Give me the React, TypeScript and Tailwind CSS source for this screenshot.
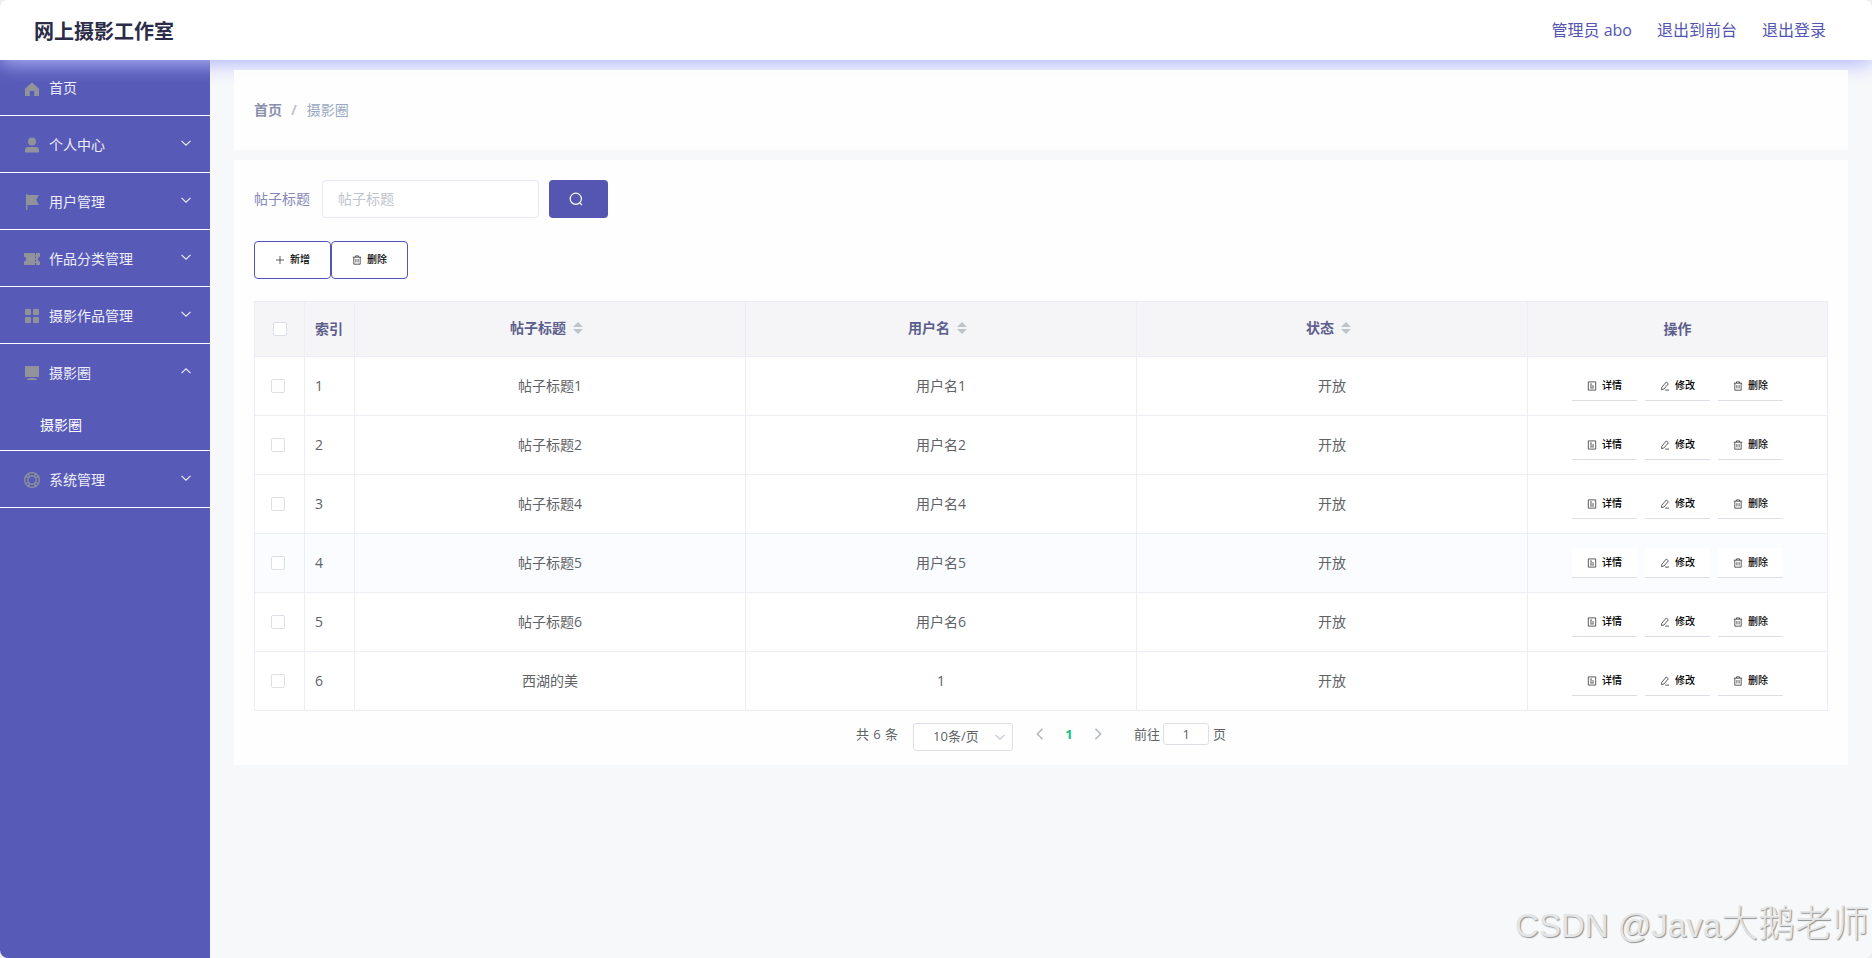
import { useState } from "react";
import { clsx } from "clsx";

interface MenuItem {
  label: string;
  icon: string;
  children?: string[];
}

const menus: MenuItem[] = [
  { label: "首页", icon: "home" },
  { label: "个人中心", icon: "user", children: [] },
  { label: "用户管理", icon: "flag", children: [] },
  { label: "作品分类管理", icon: "ticket", children: [] },
  { label: "摄影作品管理", icon: "grid", children: [] },
  { label: "摄影圈", icon: "platform", children: ["摄影圈"] },
  { label: "系统管理", icon: "help", children: [] },
];

const rows = [
  { title: "帖子标题1", user: "用户名1", status: "开放" },
  { title: "帖子标题2", user: "用户名2", status: "开放" },
  { title: "帖子标题4", user: "用户名4", status: "开放" },
  { title: "帖子标题5", user: "用户名5", status: "开放" },
  { title: "帖子标题6", user: "用户名6", status: "开放" },
  { title: "西湖的美", user: "1", status: "开放" },
];

export default function App() {
  return (
    <div className="relative h-[958px] w-[1872px] overflow-hidden bg-[#eeeeee]">
      <div className="flex h-full flex-col overflow-hidden rounded-lg bg-[#f7f8fa] font-['Open_Sans','Noto_Sans_CJK_SC',sans-serif] text-sm">
        <Header />
        <div className="flex flex-1">
          <Sidebar />
          <main className="relative z-20 flex-1 px-6 pt-2.5">
            <div className="flex h-20 items-center bg-white/90 px-5">
              <span className="font-bold text-[#8a8fae]">首页</span>
              <span className="mr-2.5 ml-[9px] font-bold text-[#c0c4cc]">/</span>
              <span className="text-[#9aa8c4]">摄影圈</span>
            </div>
            <PostPanel />
          </main>
        </div>
      </div>
      <div className="absolute right-[3px] bottom-2 z-30 flex items-baseline font-['Liberation_Sans','Noto_Sans_CJK_SC',sans-serif] text-[#e3e5e6] [text-shadow:1px_1px_1px_#8f8f8f]">
        <span className="text-[33px]">CSDN @Java</span>
        <span className="text-[37px] leading-none font-light">大鹅老师</span>
      </div>
    </div>
  );
}

function Header() {
  return (
    <header className="relative z-10 flex h-[60px] shrink-0 items-center justify-between bg-white pr-[46px] pl-[34px] shadow-[0_4px_20px_#afb4fc]">
      <h1 className="pt-[3px] text-xl font-bold text-[#2b2c48]">网上摄影工作室</h1>
      <nav className="flex gap-[25px] text-base text-[#5355b3]">
        <span>管理员 abo</span>
        <span>退出到前台</span>
        <span>退出登录</span>
      </nav>
    </header>
  );
}

function Sidebar() {
  const [opened, setOpened] = useState("摄影圈");

  return (
    <aside className="w-[210px] shrink-0 bg-[#575ab7] text-[#eeeef8]">
      {menus.map((menu) => {
        const isOpen = opened === menu.label;
        return (
          <div key={menu.label} className="border-b border-white">
            <div
              onClick={() => menu.children && setOpened(isOpen ? "" : menu.label)}
              className={clsx(
                "flex cursor-pointer items-center pr-[18px] pl-5",
                menu.children ? "h-14 pt-0.5" : "h-[55px] pt-0.5"
              )}
            >
              <MenuIcon name={menu.icon} />
              <span className={clsx("ml-[5px] flex-1", !menu.children && "pb-0.5")}>{menu.label}</span>
              {menu.children && (
                <Chevron className={clsx("mb-[5px] h-3 w-3", isOpen && "rotate-180")} />
              )}
            </div>
            {isOpen &&
              menu.children?.map((child) => (
                <div key={child} className="flex h-[50px] items-center pl-10 text-white">
                  {child}
                </div>
              ))}
          </div>
        );
      })}
    </aside>
  );
}

function PostPanel() {
  return (
    <section className="mt-2.5 h-[605px] bg-white/90 p-5">
      <div className="flex h-[38px] items-center">
        <label className="w-[68px] text-[#8588b8]">帖子标题</label>
        <input
          placeholder="帖子标题"
          className="h-[38px] w-[217px] rounded border border-[#e9e8fb] bg-white px-[15px] pb-0.5 outline-none placeholder:text-[#c0c4cc]"
        />
        <button className="ml-2.5 flex h-[38px] w-[59px] items-center justify-center rounded bg-[#5456b1] pr-[5px] text-white">
          <svg viewBox="0 0 14 14" className="h-3.5 w-3.5" fill="none" stroke="currentColor" strokeWidth={1.2}>
            <circle cx="6.8" cy="6.8" r="5.6" />
            <path d="M10.8 10.8L13 13" />
          </svg>
        </button>
      </div>

      <div className="mt-[23px] flex">
        <ToolButton icon="plus" label="新增" />
        <ToolButton icon="trash" label="删除" />
      </div>

      <table className="mt-[22px] w-[1574px] table-fixed border-separate border-spacing-0 border-t border-l border-[#ebeef5]">
        <colgroup>
          <col className="w-[50px]" />
          <col className="w-[50px]" />
          <col className="w-[391px]" />
          <col className="w-[391px]" />
          <col className="w-[391px]" />
          <col className="w-[300px]" />
        </colgroup>
        <thead>
          <tr className="h-[55px] bg-[#f5f5f8] text-[#5c5e8c]">
            <th className={cell}>
              <Checkbox className="ml-[18px]" />
            </th>
            <th className={clsx(cell, "pl-2.5 text-left")}>索引</th>
            {["帖子标题", "用户名", "状态"].map((name) => (
              <th key={name} className={cell}>
                <div className="flex items-center justify-center pb-0.5">
                  {name}
                  <SortCaret />
                </div>
              </th>
            ))}
            <th className={cell}>操作</th>
          </tr>
        </thead>
        <tbody className="text-center text-[#606266]">
          {rows.map((row, i) => (
            <tr key={row.title} className={clsx("h-[59px]", i === 3 ? "bg-[#fafcff]" : "bg-white")}>
              <td className={cell}>
                <Checkbox className="ml-4" />
              </td>
              <td className={clsx(cell, "pl-2.5 text-left")}>{i + 1}</td>
              <td className={cell}>{row.title}</td>
              <td className={cell}>{row.user}</td>
              <td className={cell}>{row.status}</td>
              <td className={cell}>
                <div className="flex justify-center gap-2">
                  <RowButton icon="doc" label="详情" />
                  <RowButton icon="edit" label="修改" />
                  <RowButton icon="trash" label="删除" />
                </div>
              </td>
            </tr>
          ))}
        </tbody>
      </table>

      <Pagination />
    </section>
  );
}

const cell = "border-r border-b border-[#ebeef5] p-0";

function Checkbox({ className }: { className?: string }) {
  return <span className={clsx("block h-3.5 w-3.5 rounded-xs border border-[#dcdfe6] bg-white", className)} />;
}

function SortCaret() {
  return (
    <svg viewBox="0 0 24 14" className="h-3.5 w-6" fill="#c0c4cc">
      <path d="M7 6L12 1L17 6Z" />
      <path d="M7 8L12 13L17 8Z" />
    </svg>
  );
}

function ToolButton({ icon, label }: { icon: string; label: string }) {
  return (
    <button className="flex h-[38px] w-[77px] items-center justify-center rounded border border-[#5355b3] bg-white pb-px text-[10px] font-medium text-black">
      <ActionIcon name={icon} />
      <span className="ml-[5px]">{label}</span>
    </button>
  );
}

function RowButton({ icon, label }: { icon: string; label: string }) {
  return (
    <button className="flex h-[30px] w-[65px] items-center justify-center border-b border-[#dcdfe6] bg-white text-[10px] font-medium text-black">
      <ActionIcon name={icon} />
      <span className="ml-[5px]">{label}</span>
    </button>
  );
}

function Pagination() {
  return (
    <div className="mt-3 flex items-start justify-center text-[13px] text-[#606266]">
      <span className="leading-[22px] [word-spacing:1px]">共 6 条</span>
      <div className="ml-[15px] flex h-7 w-[100px] items-center rounded-[3px] border border-[#dcdfe6] bg-white pr-1.5 pl-[19px]">
        <span className="flex-1 pb-0.5">10条/页</span>
        <Chevron className="h-3 w-3 text-[#c0c4cc]" />
      </div>
      <div className="ml-5 flex h-[22px] items-center">
        <Chevron className="h-3.5 w-3.5 rotate-90 text-[#b4b8c0]" bold />
        <span className="w-[44px] text-center font-bold text-[#13c07f]">1</span>
        <Chevron className="h-3.5 w-3.5 -rotate-90 text-[#b4b8c0]" bold />
      </div>
      <div className="ml-[29px] flex items-center leading-[22px]">
        <span>前往</span>
        <span className="mr-1 ml-[3px] flex h-[22px] w-[46px] items-center justify-center rounded-[3px] border border-[#dcdfe6] bg-white">
          1
        </span>
        <span>页</span>
      </div>
    </div>
  );
}

function Chevron({ className, bold }: { className?: string; bold?: boolean }) {
  return (
    <svg
      viewBox="0 0 12 12"
      className={className}
      fill="none"
      stroke="currentColor"
      strokeWidth={bold ? 1.4 : 1.1}
    >
      <path d="M1.5 3.8L6 8.2L10.5 3.8" />
    </svg>
  );
}

function ActionIcon({ name }: { name: string }) {
  return (
    <svg viewBox="0 0 10 10" className="h-2.5 w-2.5" fill="none" stroke="#333" strokeWidth={0.8}>
      {name === "plus" && <path d="M5 1V9M1 5H9" />}
      {name === "trash" && (
        <path d="M0.8 2.2H9.2M3.4 2V0.9H6.6V2M1.8 2.4V9.2H8.2V2.4M3.9 4V7.4M6.1 4V7.4" />
      )}
      {name === "doc" && <path d="M1.3 0.9H8.7V9.1H1.3ZM3 3.1H5M3 5H7M3 6.9H7" />}
      {name === "edit" && <path d="M1.8 6.2L6.3 1L8.4 2.8L3.9 8L1.5 8.6ZM5.2 9.1H9" />}
    </svg>
  );
}

function MenuIcon({ name }: { name: string }) {
  return (
    <svg viewBox="0 0 18 18" className="mx-[3px] h-[18px] w-[18px]" fill="#909399">
      {name === "home" && <path d="M9 2.6L16 8.4V16H11.2V11H6.8V16H2V8.4Z" />}
      {name === "user" && (
        <>
          <circle cx="9" cy="5.5" r="4" />
          <path d="M2 16.5V14Q2 11 5 11H13Q16 11 16 14V16.5Z" />
        </>
      )}
      {name === "flag" && <path d="M3 1H4.4V2H16L13.2 6.8L16 12H4.4V17H3Z" />}
      {name === "ticket" && (
        <path d="M1 3H12V5H13V3H17V6.5Q14.8 7 14.8 9T17 11.5V15H13V13H12V15H1V11.5Q3.2 11 3.2 9T1 6.5ZM12 6.4V8.2H13V6.4ZM12 9.8V11.6H13V9.8Z" />
      )}
      {name === "grid" && (
        <>
          <rect x="2" y="2" width="6" height="6" rx="0.8" />
          <rect x="10" y="2" width="6" height="6" rx="0.8" />
          <rect x="2" y="10" width="6" height="6" rx="0.8" />
          <rect x="10" y="10" width="6" height="6" rx="0.8" />
        </>
      )}
      {name === "platform" && <path d="M2 2H16V13H2ZM7 14H11L14 15V16H4V15Z" />}
      {name === "help" && (
        <g fill="none" stroke="#909399" strokeWidth="1.2">
          <circle cx="9" cy="9" r="7.4" />
          <circle cx="9" cy="9" r="4.2" />
          <path d="M5 2.6L6.9 5.3M13 2.6L11.1 5.3M5 15.4L6.9 12.7M13 15.4L11.1 12.7M2.6 5L5.3 6.9M2.6 13L5.3 11.1M15.4 5L12.7 6.9M15.4 13L12.7 11.1" />
        </g>
      )}
    </svg>
  );
}
